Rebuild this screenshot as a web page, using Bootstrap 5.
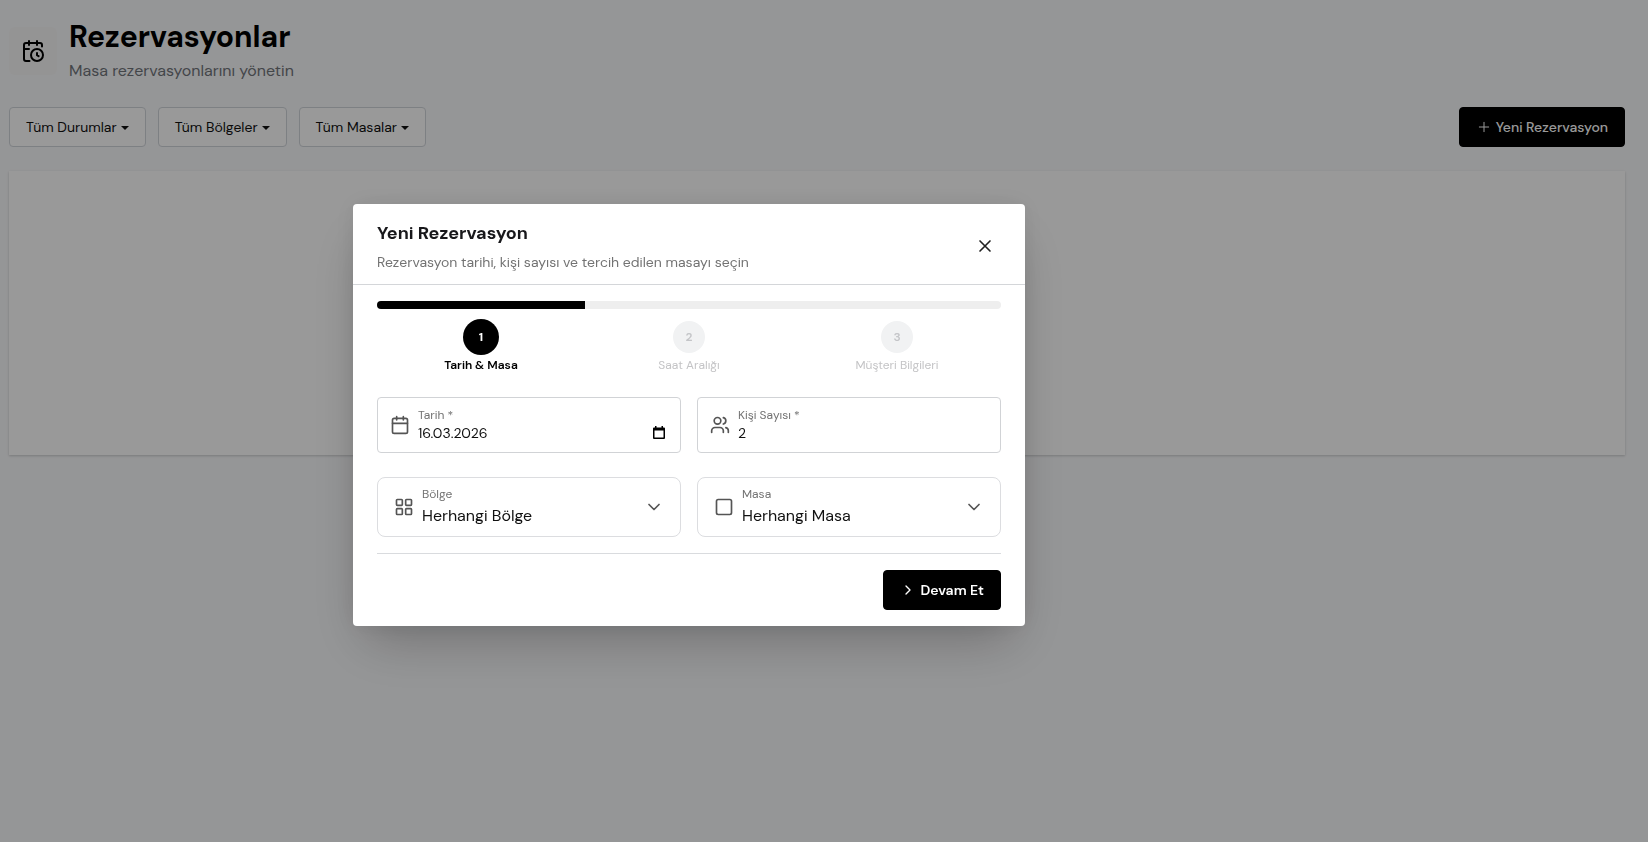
<!DOCTYPE html>
<html lang="tr">
<head>
<meta charset="utf-8">
<meta name="viewport" content="width=device-width, initial-scale=1">
<title>Rezervasyonlar</title>
<link href="https://cdn.jsdelivr.net/npm/bootstrap@5.3.0/dist/css/bootstrap.min.css" rel="stylesheet">
<style>
  body { font-family: "DM Sans", Roboto, sans-serif; background: #f9fafc; color: #111; min-height: 100vh; }
  svg { display: block; flex: none; fill: none; stroke: currentColor; stroke-width: 2; stroke-linecap: round; stroke-linejoin: round; }

  .page { padding: 19px 23px 20px 9px; }
  .page-head, .filters { gap: 12px; }
  .page-icon { width: 48px; height: 48px; background: #f7f7f7; color: #000; }
  .page-title { font-size: 30px; line-height: 36px; font-weight: 700; color: #000; }
  .page-sub { font-size: 16px; line-height: 24px; color: #71757b; }

  .btn { font-size: 14px; line-height: 20px; height: 40px; border-radius: 4px; padding: 9px 16px; }
  .btn-filter { --bs-btn-bg: #fff; --bs-btn-border-color: #d1d5db; --bs-btn-color: #111; }
  .btn-filter.dropdown-toggle::after { vertical-align: 2px; margin-left: 4px; }
  .btn-ink { --bs-btn-bg: #000; --bs-btn-color: #fff; --bs-btn-border-color: #000; --bs-btn-hover-bg: #222; --bs-btn-hover-color: #fff; font-weight: 500; }
  .btn-ink.strong { font-weight: 600; }
  .list-panel { min-height: 284px; background: #fff; box-shadow: 0 1px 3px rgba(0,0,0,.1), 0 1px 2px rgba(0,0,0,.1); }

  .modal { background: rgba(0,0,0,.4); padding: 0 270px 12px 0; }
  .modal-dialog { max-width: 672px; }
  .modal-dialog-centered { min-height: calc(100% - 56px); }
  .modal-content { border: 0; border-radius: 4px; box-shadow: 0 25px 50px -12px rgba(0,0,0,.25), 0 0 24px rgba(0,0,0,.08); }
  .modal-header { padding: 16px 24px 12px; border-color: #d4d6d9; border-radius: 0; }
  .modal-title { font-size: 18px; line-height: 26px; margin-bottom: 6px; font-weight: 700; color: #18181b; }
  .modal-sub { font-size: 14px; line-height: 20px; color: #737373; }
  .btn-x { width: 32px; height: 32px; color: #222; }
  .modal-body { padding: 16px 24px; }

  .progress { height: 8px; border-radius: 4px; background: #eee; --bs-progress-bar-bg: #000; }
  .steps { padding-top: 10px; }
  .step-item { flex: 1 1 0; font-size: 12px; line-height: 16px; color: #c4c4c6; }
  .step-dot { width: 32px; height: 32px; margin: 2px 0 4px; background: #f1f2f3; color: #c4c5c8; font-weight: 600; }
  .step-item.current { color: #000; font-weight: 600; }
  .step-item.current .step-dot { width: 36px; height: 36px; margin: 0 0 2px; background: #000; color: #fff; font-weight: 700; }

  .fields { gap: 24px 16px; padding-top: 24px; display: grid; grid-template-columns: 1fr 1fr; }
  .field-box { height: 56px; border: 1px solid #d1d3d6; border-radius: 4px; padding: 0 12px; color: #555; }
  .field-box.roomy { height: 60px; border-color: #dcdde0; border-radius: 8px; padding: 0 16px; }
  .field-box label { font-size: 12px; line-height: 16px; color: #737373; }
  .field-box.roomy label { margin-bottom: 2px; }
  .field-box input, .field-box select { appearance: none; border: 0; padding: 0; background: none; outline: 0; width: 100%; color: #111; }
  .field-box input { font-size: 14px; line-height: 20px; height: 20px; font-variant-numeric: tabular-nums; }
  .field-box select { font-size: 16px; line-height: 24px; height: 24px; }
  .field-box input[type=number] { appearance: textfield; }
  .foot { border-top: 1px solid #d9dbde; margin-top: 16px; padding-top: 16px; }
</style>
</head>
<body>
<main class="page d-flex flex-column">
  <header class="page-head d-flex align-items-center">
    <div class="page-icon rounded d-flex align-items-center justify-content-center">
      <svg width="24" height="24" viewBox="0 0 24 24"><path d="M16 14v2.200l1.600 1M16 2v4M21 7.500V6a2 2 0 0 0-2-2H5a2 2 0 0 0-2 2v14a2 2 0 0 0 2 2h3.500M3 10h5M8 2v4"/><circle cx="16" cy="16" r="6"/></svg>
    </div>
    <div>
      <h1 class="page-title mb-1">Rezervasyonlar</h1>
      <p class="page-sub mb-0">Masa rezervasyonlarını yönetin</p>
    </div>
  </header>

  <div class="d-flex justify-content-between mt-4">
    <div class="filters d-flex">
      <button type="button" class="btn btn-filter dropdown-toggle">Tüm Durumlar</button>
      <button type="button" class="btn btn-filter dropdown-toggle">Tüm Bölgeler</button>
      <button type="button" class="btn btn-filter dropdown-toggle">Tüm Masalar</button>
    </div>
    <button type="button" class="btn btn-ink d-flex align-items-center gap-1">
      <svg width="16" height="16" viewBox="0 0 24 24"><path stroke-width="1.500" d="M5 12h14M12 5v14"/></svg>Yeni Rezervasyon
    </button>
  </div>

  <section class="list-panel mt-4" aria-label="Rezervasyon listesi"></section>
</main>

<div class="modal show d-block" role="dialog" aria-modal="true" aria-labelledby="dlgTitle">
  <div class="modal-dialog modal-dialog-centered">
    <div class="modal-content">
      <div class="modal-header justify-content-between">
        <div>
          <h2 class="modal-title" id="dlgTitle">Yeni Rezervasyon</h2>
          <p class="modal-sub mb-0">Rezervasyon tarihi, kişi sayısı ve tercih edilen masayı seçin</p>
        </div>
        <button type="button" class="btn btn-x border-0 p-0 d-flex align-items-center justify-content-center" aria-label="Kapat">
          <svg width="20" height="20" viewBox="0 0 24 24"><path d="M18 6 6 18M6 6l12 12"/></svg>
        </button>
      </div>
      <form class="modal-body">
        <div class="progress" role="progressbar" aria-valuenow="1" aria-valuemin="0" aria-valuemax="3">
          <div class="progress-bar" style="width: 33.333%"></div>
        </div>
        <div class="steps d-flex text-center">
          <div class="step-item current d-flex flex-column align-items-center"><span class="step-dot rounded-circle d-flex align-items-center justify-content-center">1</span><span>Tarih &amp; Masa</span></div>
          <div class="step-item d-flex flex-column align-items-center"><span class="step-dot rounded-circle d-flex align-items-center justify-content-center">2</span><span>Saat Aralığı</span></div>
          <div class="step-item d-flex flex-column align-items-center"><span class="step-dot rounded-circle d-flex align-items-center justify-content-center">3</span><span>Müşteri Bilgileri</span></div>
        </div>

        <div class="fields">
          <div class="field-box d-flex align-items-center gap-2">
            <svg width="20" height="20" viewBox="0 0 24 24"><path d="M8 2v4M16 2v4M3 10h18"/><rect x="3" y="4" width="18" height="18" rx="2"/></svg>
            <div class="flex-grow-1 d-flex flex-column">
              <label for="tarih">Tarih *</label>
              <div class="d-flex align-items-center">
                <input id="tarih" type="text" value="16.03.2026">
                <button type="button" class="border-0 bg-transparent p-0 text-black" aria-label="Takvimi aç">
                  <svg width="18" height="14" viewBox="0 0 18 14"><path fill="#000" stroke="none" fill-rule="evenodd" d="M5 0h1.500v1.500h5V0H13v1.500h1a1 1 0 0 1 1 1V12a1 1 0 0 1-1 1H4a1 1 0 0 1-1-1V2.500a1 1 0 0 1 1-1h1zM4.500 4.500v7h9v-7z"/></svg>
                </button>
              </div>
            </div>
          </div>
          <div class="field-box d-flex align-items-center gap-2">
            <svg width="20" height="20" viewBox="0 0 24 24"><path d="M16 21v-2a4 4 0 0 0-4-4H6a4 4 0 0 0-4 4v2M22 21v-2a4 4 0 0 0-3-3.870M16 3.130a4 4 0 0 1 0 7.750"/><circle cx="9" cy="7" r="4"/></svg>
            <div class="flex-grow-1 d-flex flex-column">
              <label for="kisi">Kişi Sayısı *</label>
              <input id="kisi" type="number" value="2" min="1">
            </div>
          </div>
          <div class="field-box roomy d-flex align-items-center gap-2">
            <svg width="20" height="20" viewBox="0 0 24 24"><rect x="3" y="3" width="7" height="7" rx="1"/><rect x="14" y="3" width="7" height="7" rx="1"/><rect x="14" y="14" width="7" height="7" rx="1"/><rect x="3" y="14" width="7" height="7" rx="1"/></svg>
            <div class="flex-grow-1 d-flex flex-column">
              <label for="bolge">Bölge</label>
              <select id="bolge"><option>Herhangi Bölge</option></select>
            </div>
            <svg width="20" height="20" viewBox="0 0 24 24"><path d="m6 9 6 6 6-6"/></svg>
          </div>
          <div class="field-box roomy d-flex align-items-center gap-2">
            <svg width="20" height="20" viewBox="0 0 24 24"><rect x="3" y="3" width="18" height="18" rx="2"/></svg>
            <div class="flex-grow-1 d-flex flex-column">
              <label for="masa">Masa</label>
              <select id="masa"><option>Herhangi Masa</option></select>
            </div>
            <svg width="20" height="20" viewBox="0 0 24 24"><path d="m6 9 6 6 6-6"/></svg>
          </div>
        </div>

        <div class="foot d-flex justify-content-end">
          <button type="button" class="btn btn-ink strong d-flex align-items-center gap-1">
            <svg width="16" height="16" viewBox="0 0 24 24"><path d="m9 18 6-6-6-6"/></svg>Devam Et
          </button>
        </div>
      </form>
    </div>
  </div>
</div>
<script src="https://cdn.jsdelivr.net/npm/bootstrap@5.3.0/dist/js/bootstrap.bundle.min.js"></script>
</body>
</html>
